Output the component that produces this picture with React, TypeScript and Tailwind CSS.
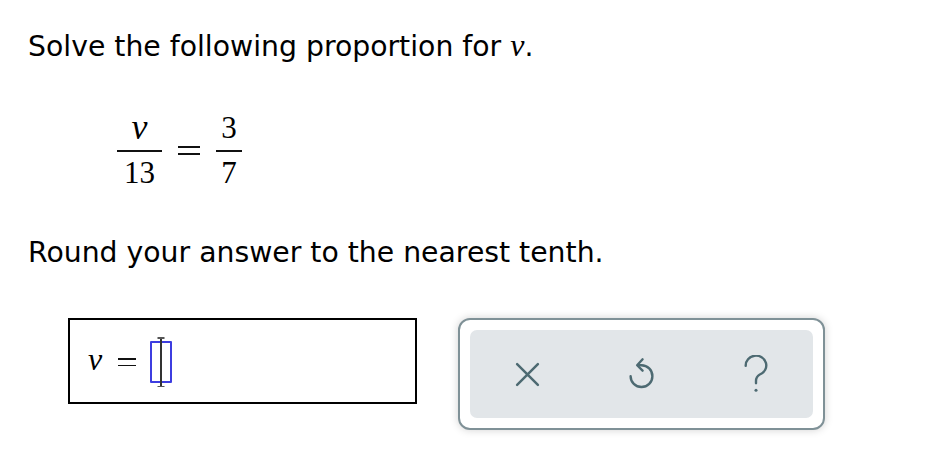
import React from "react";

const serif = { fontFamily: '"Liberation Serif", "Times New Roman", serif' };
const sans = { fontFamily: '"DejaVu Sans", Verdana, sans-serif' };

function Equals({ w, gap, t }: { w: number; gap: number; t: number }) {
  return (
    <div className="flex flex-col" style={{ width: w, gap }}>
      <div className="w-full bg-[#111]" style={{ height: t }} />
      <div className="w-full bg-[#111]" style={{ height: t }} />
    </div>
  );
}

export default function App() {
  return (
    <div className="w-[940px] h-[472px] bg-white overflow-hidden pt-[29px] pl-[28px] text-black">
      <div className="h-[32px] leading-[32px] text-[28.3px] whitespace-nowrap" style={sans}>
        Solve the following proportion for{" "}
        <span className="italic text-[32px]" style={serif}>v</span>.
      </div>

      <div className="mt-[51px] ml-[89px] flex items-center">
        <div className="flex flex-col items-center w-[45px]">
          <div className="h-[31px] leading-[31px] text-[36px] italic" style={serif}>v</div>
          <div className="mt-[7px] h-[2px] w-full bg-[#111]" />
          <div className="mt-[5px] h-[31px] leading-[31px] text-[31px]" style={serif}>13</div>
        </div>
        <div className="mx-[16px]">
          <Equals w={22} gap={5} t={2} />
        </div>
        <div className="flex flex-col items-center w-[26px]">
          <div className="h-[31px] leading-[31px] text-[31px]" style={serif}>3</div>
          <div className="mt-[7px] h-[2px] w-full bg-[#111]" />
          <div className="mt-[5px] h-[31px] leading-[31px] text-[31px]" style={serif}>7</div>
        </div>
      </div>

      <div className="mt-[49px] h-[32px] leading-[32px] text-[28.3px] whitespace-nowrap" style={sans}>
        Round your answer to the nearest tenth.
      </div>

      <div className="mt-[49px] ml-[40px] flex items-start">
        <div className="w-[349px] h-[86px] border-2 border-black flex items-center pl-[18px]">
          <span className="italic text-[32px] leading-[32px] mt-[-4px]" style={serif}>v</span>
          <div className="ml-[16px] mt-[2px]">
            <Equals w={18} gap={5} t={1.5} />
          </div>
          <div className="ml-[14px] mt-[2px] relative w-[22px] h-[42px] border-2 border-[#3d3de0] rounded-[1px]">
            <div className="absolute left-1/2 -translate-x-1/2 top-[-6px] bottom-[-6px] w-[2px] bg-[#333]" />
            <div className="absolute left-1/2 -translate-x-1/2 top-[-6px] w-[7px] h-[1.5px] bg-[#555]" />
            <div className="absolute left-1/2 -translate-x-1/2 bottom-[-6px] w-[7px] h-[1.5px] bg-[#555]" />
          </div>
        </div>

        <div className="ml-[41px] w-[367px] h-[112px] border-2 border-[#7f9197] rounded-[12px] p-[10px] shadow-[0_0_8px_rgba(0,0,0,0.18)] bg-white">
          <div className="h-full w-full rounded-[7px] bg-[#e2e6e9] grid grid-cols-3 items-center justify-items-center">
            <svg width="27" height="27" viewBox="0 0 26 26" fill="none" stroke="#4d6a72" strokeWidth="2.4" strokeLinecap="round">
              <path d="M3 3 L23 23 M23 3 L3 23" />
            </svg>
            <svg width="33" height="37" viewBox="0 0 30 34" fill="none" stroke="#4d6a72" strokeWidth="2.2" strokeLinecap="round" strokeLinejoin="round">
              <path d="M13 8.5 H15 A10 10 0 1 1 5 18.5" />
              <path d="M16 3 L11 8.5 L16 13.5" />
            </svg>
            <svg width="26" height="39" viewBox="0 0 24 36" fill="none" stroke="#4d6a72" strokeWidth="2.2" strokeLinecap="round">
              <path d="M2.5 10 A9.5 9 0 1 1 15.5 18 C13 19.5 12 21 12 24 V26" />
              <circle cx="12" cy="32.5" r="1.4" fill="#4d6a72" stroke="none" />
            </svg>
          </div>
        </div>
      </div>
    </div>
  );
}
